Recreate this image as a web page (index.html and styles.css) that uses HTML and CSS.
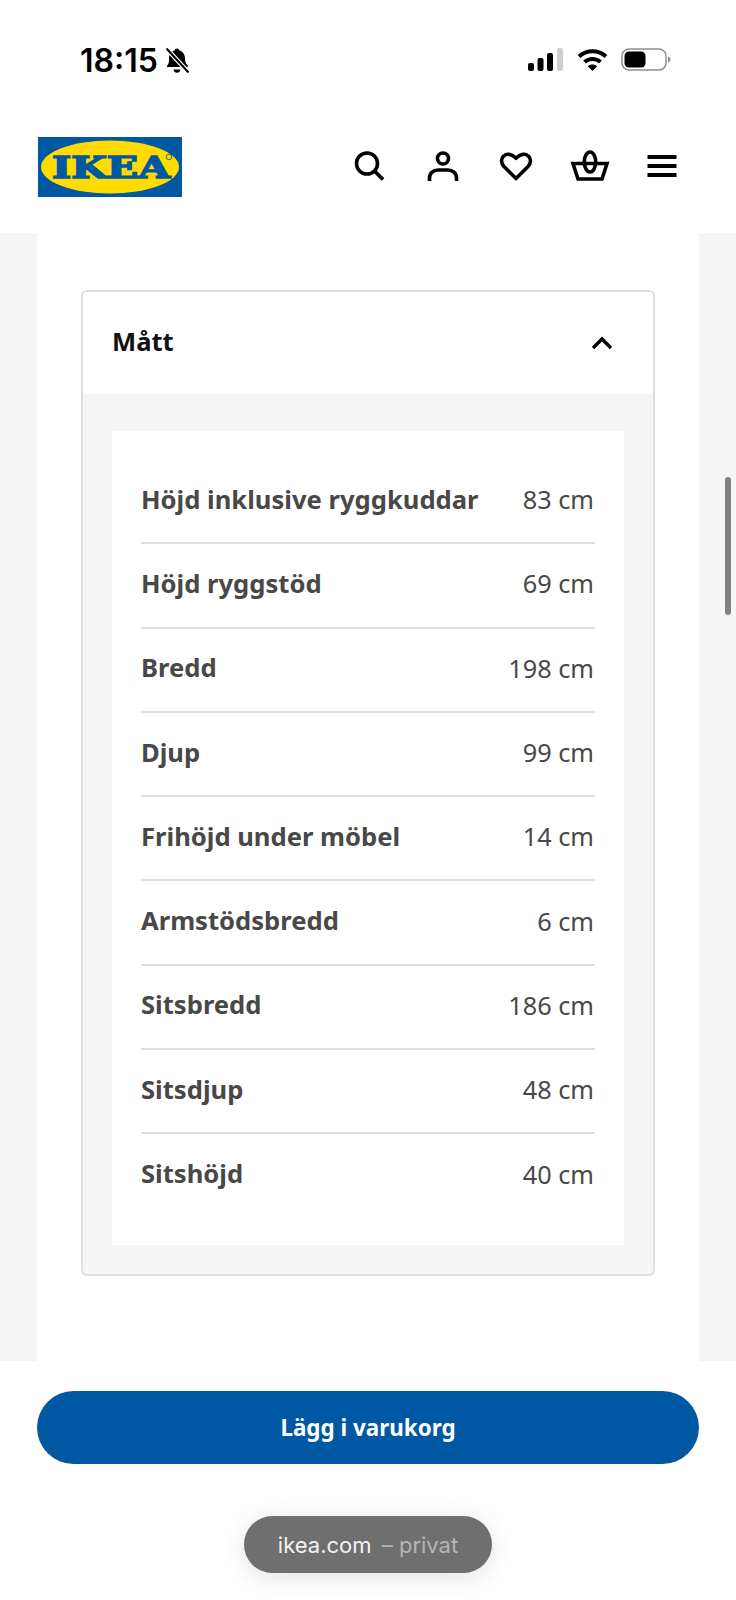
FILE: index.html
```html
<!DOCTYPE html>
<html lang="sv">
<head>
    <meta charset="UTF-8">
    <meta name="viewport" content="width=device-width, initial-scale=1.0">
    <title>Mått</title>
    <link rel="stylesheet" href="styles.css">
</head>
<body>
    <div class="status-bar">
        <div class="status-left">
            <span class="clock">18:15</span>
            <svg class="bell" width="26" height="27" viewBox="0 0 26 27">
                <path d="M13 1.500c1.300 0 2.200.9 2.400 2 3.600 1 5.600 4 5.600 8 0 3 .6 4.800 2.400 6.700.5.6.6 1.100.4 1.800H4.500C2.800 20.700 2.400 19.600 3.300 18.500 5 16.700 5 14.500 5 11.500c0-4 2-7 5.600-8 .2-1.100 1.100-2 2.400-2z" fill="#000"/>
                <path d="M9.500 22.500h7c-.3 2-1.700 3.300-3.500 3.300s-3.200-1.300-3.500-3.300z" fill="#000"/>
                <path d="M2.500 1.500l22 24" stroke="#fff" stroke-width="4.500"/>
                <path d="M2.500 1.500l22 24" stroke="#000" stroke-width="2"/>
            </svg>
        </div>
        <div class="status-right">
            <svg width="36" height="23" viewBox="0 0 36 23">
                <rect x="0" y="15" width="6" height="8" rx="2" fill="#000"/>
                <rect x="9.500" y="10" width="6" height="13" rx="2" fill="#000"/>
                <rect x="19" y="5" width="6" height="18" rx="2" fill="#000"/>
                <rect x="29" y="0" width="6" height="23" rx="2" fill="#cfcfcf"/>
            </svg>
            <svg width="31" height="23" viewBox="0 0 31 23">
                <path d="M2 8.500C9.500 1.500 21.500 1.500 29 8.500" fill="none" stroke="#000" stroke-width="4"/>
                <path d="M7.500 14c4.500-4 11.500-4 16 0" fill="none" stroke="#000" stroke-width="4"/>
                <path d="M10.800 18.200c2.700-2.300 6.700-2.300 9.400 0L15.500 23z" fill="#000"/>
            </svg>
            <svg width="50" height="23" viewBox="0 0 50 23">
                <rect x="1" y="1" width="44" height="21" rx="7" fill="none" stroke="#8e8e8e" stroke-width="1.500"/>
                <rect x="3.500" y="3.500" width="21" height="16" rx="4.500" fill="#000"/>
                <path d="M47 8.500c1.800.6 2.500 1.700 2.500 3s-.7 2.400-2.500 3z" fill="#8e8e8e"/>
            </svg>
        </div>
    </div>

    <header class="site-header">
        <svg class="logo" width="144" height="60" viewBox="0 0 144 60">
            <rect width="144" height="60" fill="#0058a3"/>
            <ellipse cx="72" cy="30" rx="69" ry="26.500" fill="#ffdb00"/>
            <text class="logo-text" x="14" y="40.500" textLength="118" lengthAdjust="spacingAndGlyphs">IKEA</text>
            <circle cx="131" cy="20" r="2.800" fill="none" stroke="#0058a3" stroke-width="0.800"/>
        </svg>
        <nav class="header-icons">
            <svg width="40" height="40" viewBox="0 0 40 40">
                <circle cx="18" cy="17.500" r="10.500" fill="none" stroke="#000" stroke-width="3.600"/>
                <path d="M25.500 25l8.500 8.500" stroke="#000" stroke-width="3.800" fill="none"/>
            </svg>
            <svg width="40" height="40" viewBox="0 0 40 40">
                <circle cx="20" cy="12.500" r="5.500" fill="none" stroke="#000" stroke-width="3.600"/>
                <path d="M6.500 35v-3c0-5 4-8 8.500-8h10c4.500 0 8.500 3 8.500 8v3" fill="none" stroke="#000" stroke-width="3.600"/>
            </svg>
            <svg width="40" height="40" viewBox="0 0 40 40">
                <path d="M20 32.500L8 20.500c-3.200-3.400-3.200-7.800-.4-10.400 3-2.800 8-2.500 12.400 2.200 4.400-4.700 9.400-5 12.400-2.200 2.800 2.600 2.800 7-.4 10.400z" fill="none" stroke="#000" stroke-width="3.600" stroke-linejoin="round"/>
            </svg>
            <svg width="40" height="40" viewBox="0 0 40 40">
                <path d="M3 17.500h34l-5 15.500H8z" fill="none" stroke="#000" stroke-width="3.600"/>
                <ellipse cx="20" cy="16" rx="5.700" ry="10" fill="none" stroke="#000" stroke-width="3.600"/>
            </svg>
            <svg width="40" height="40" viewBox="0 0 40 40">
                <path d="M4.500 11h29M4.500 20h29M4.500 29h29" stroke="#000" stroke-width="3.800" fill="none"/>
            </svg>
        </nav>
    </header>

    <main class="page-bg">
        <div class="page-column">
            <section class="accordion">
                <div class="accordion-head">
                    <h2>Mått</h2>
                    <svg width="24" height="24" viewBox="0 0 24 24">
                        <path d="M3 17l9-9 9 9" fill="none" stroke="#000" stroke-width="3.400"/>
                    </svg>
                </div>
                <div class="accordion-body">
                    <dl class="measures">
                        <div class="measure-row"><dt>Höjd inklusive ryggkuddar</dt><dd>83 cm</dd></div>
                        <div class="measure-row"><dt>Höjd ryggstöd</dt><dd>69 cm</dd></div>
                        <div class="measure-row"><dt>Bredd</dt><dd>198 cm</dd></div>
                        <div class="measure-row"><dt>Djup</dt><dd>99 cm</dd></div>
                        <div class="measure-row"><dt>Frihöjd under möbel</dt><dd>14 cm</dd></div>
                        <div class="measure-row"><dt>Armstödsbredd</dt><dd>6 cm</dd></div>
                        <div class="measure-row"><dt>Sitsbredd</dt><dd>186 cm</dd></div>
                        <div class="measure-row"><dt>Sitsdjup</dt><dd>48 cm</dd></div>
                        <div class="measure-row"><dt>Sitshöjd</dt><dd>40 cm</dd></div>
                    </dl>
                </div>
            </section>
        </div>
    </main>

    <footer class="buy-bar">
        <button class="buy-btn">Lägg i varukorg</button>
        <div class="url-pill">ikea.com <span class="url-private">– privat</span></div>
    </footer>

    <div class="scroll-thumb"></div>
</body>
</html>
```

FILE: styles.css
```css
* {
    box-sizing: border-box;
}
body {
    margin: 0;
    height: 1600px;
    overflow: hidden;
    background-color: #fff;
    font-family: "Noto Sans", sans-serif;
    color: #484848;
}
.status-bar {
    height: 120px;
    padding: 47px 65px 0 80px;
    display: flex;
    justify-content: space-between;
    align-items: flex-start;
}
.status-left {
    display: flex;
    align-items: center;
    gap: 6px;
}
.clock {
    font-family: Inter, sans-serif;
    font-weight: 600;
    font-size: 32px;
    line-height: 27px;
    color: #000;
}
.status-right {
    display: flex;
    gap: 13px;
    padding-top: 1px;
}
.site-header {
    height: 113px;
    padding: 17px 53px 0 38px;
    display: flex;
    justify-content: space-between;
    align-items: flex-start;
}
.logo {
    display: block;
}
.logo-text {
    font-family: "DejaVu Serif", serif;
    font-weight: 900;
    font-size: 30px;
    fill: #0058a3;
    stroke: #0058a3;
    stroke-width: 1.6px;
}
.header-icons {
    display: flex;
    gap: 33.5px;
    padding-top: 9px;
}
.page-bg {
    height: 1128px;
    padding: 0 37px;
    background-color: #f5f5f5;
}
.page-column {
    height: 100%;
    padding: 57px 44px 0;
    background-color: #fff;
}
.accordion {
    height: 986px;
    border: 2px solid #dfdfdf;
    border-radius: 6px;
    background-color: #f5f5f5;
    overflow: hidden;
}
.accordion-head {
    height: 102px;
    padding: 0 39px 0 29px;
    display: flex;
    justify-content: space-between;
    align-items: center;
    background-color: #fff;
}
.accordion-head h2 {
    margin: 0;
    padding-bottom: 4px;
    font-size: 25.6px;
    font-weight: 700;
    color: #111;
}
.accordion-body {
    padding: 37px 29px 0;
}
.measures {
    margin: 0;
    height: 814px;
    padding: 29px 29px;
    background-color: #fff;
}
.measure-row {
    height: 84.3px;
    padding-bottom: 4px;
    display: flex;
    justify-content: space-between;
    align-items: center;
    border-bottom: 2px solid #dfdfdf;
    font-size: 25.6px;
}
.measure-row:last-child {
    border-bottom-color: transparent;
}
.measure-row dt {
    font-weight: 700;
}
.measure-row dd {
    margin: 0;
    padding-right: 1px;
    font-size: 25.3px;
}
.buy-bar {
    height: 239px;
    padding: 30px 37px 0;
    display: flex;
    flex-direction: column;
    align-items: center;
}
.buy-btn {
    width: 100%;
    height: 73px;
    padding-bottom: 1px;
    border: none;
    border-radius: 37px;
    background-color: #0058a3;
    color: white;
    font-family: "Noto Sans", sans-serif;
    font-size: 22.4px;
    font-weight: 700;
}
.url-pill {
    margin-top: 52px;
    width: 248px;
    height: 57px;
    border-radius: 29px;
    background-color: #6f6f6f;
    box-shadow: 0 4px 24px rgba(0, 0, 0, 0.12);
    color: #f2f2f2;
    font-family: Inter, sans-serif;
    font-size: 22px;
    line-height: 59px;
    text-align: center;
}
.url-private {
    color: #b5b5b5;
    margin-left: 4px;
}
.scroll-thumb {
    position: absolute;
    left: 725px;
    top: 477px;
    width: 6px;
    height: 138px;
    border-radius: 3px;
    background-color: #808080;
}
```
